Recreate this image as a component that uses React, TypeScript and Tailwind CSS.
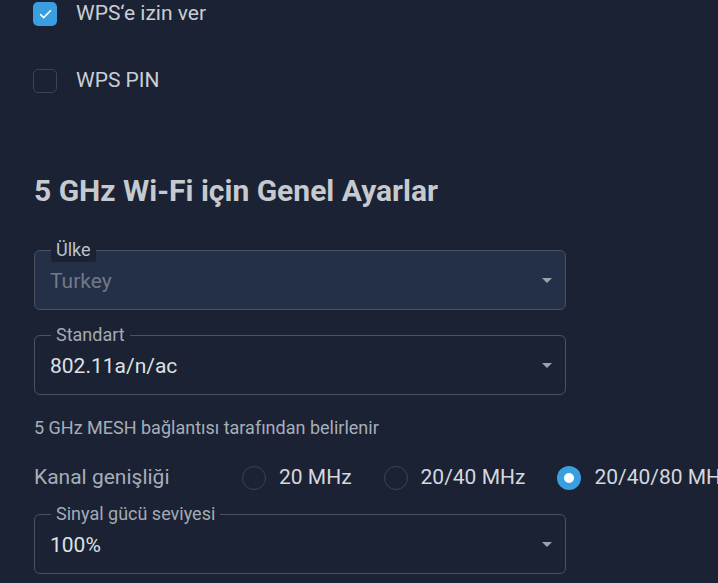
import { Check } from "lucide-react";

const WIDTHS = [
  { label: "20 MHz", checked: false },
  { label: "20/40 MHz", checked: false },
  { label: "20/40/80 MHz", checked: true },
];

function Caret() {
  return (
    <svg width="10" height="5" viewBox="0 0 10 5" className="shrink-0">
      <path d="M0 0h10L5 5z" fill="#9aa3ae" />
    </svg>
  );
}

function SelectField({ label, value, disabled }: { label: string; value: string; disabled?: boolean }) {
  return (
    <div
      className={
        "relative w-[532px] h-[60px] rounded-[6px] border border-[#4a5363] pl-[15px] pr-[13px] flex items-center justify-between " +
        (disabled ? "bg-[#243047]" : "")
      }
    >
      <span
        className={
          "absolute left-[16px] -top-[13px] h-[24px] px-[5px] rounded-[3px] bg-[#1b2233] text-[18px] leading-[24px] " +
          (disabled ? "text-[#bcc2ca]" : "text-[#a3abb5]")
        }
      >
        {label}
      </span>
      <span className={"mt-[3px] text-[21px] " + (disabled ? "text-[#707987]" : "text-[#dde1e6]")}>{value}</span>
      <Caret />
    </div>
  );
}

export default function App() {
  return (
    <div className="w-[718px] h-[583px] overflow-hidden bg-[#1b2233] font-['Roboto',sans-serif] text-[#c9ced5]">
      <div className="pl-[34px] pt-[2px]">
        <label className="flex items-center gap-[19px] h-[24px] -ml-px">
          <span className="w-[24px] h-[24px] rounded-[5px] bg-[#3b9ee0] flex items-center justify-center">
            <Check className="w-[15px] h-[15px] text-white" strokeWidth={2.5} />
          </span>
          <span className="text-[21px]">WPS‘e izin ver</span>
        </label>
        <label className="flex items-center gap-[19px] h-[24px] mt-[43px] -ml-px">
          <span className="w-[24px] h-[24px] rounded-[5px] border border-[#3a4357]" />
          <span className="text-[21px]">WPS PIN</span>
        </label>

        <h2 className="mt-[80px] text-[30px] leading-[36px] font-bold text-[#c6c9ce]">
          5 GHz Wi-Fi için Genel Ayarlar
        </h2>

        <div className="mt-[41px]">
          <SelectField label="Ülke" value="Turkey" disabled />
        </div>
        <div className="mt-[25px]">
          <SelectField label="Standart" value="802.11a/n/ac" />
        </div>

        <p className="mt-[22px] text-[18px] leading-[22px] text-[#a7aeb8]">5 GHz MESH bağlantısı tarafından belirlenir</p>

        <div className="mt-[26px] flex items-center h-[26px] whitespace-nowrap">
          <span className="w-[208px] shrink-0 text-[21px] text-[#a7aeb8]">Kanal genişliği</span>
          {WIDTHS.map((w) => (
            <label key={w.label} className="flex shrink-0 items-center gap-[13px] mr-[32px]">
              {w.checked ? (
                <span className="w-[24px] h-[24px] rounded-full bg-[#3b9ee0] flex items-center justify-center">
                  <span className="w-[10px] h-[10px] rounded-full bg-white" />
                </span>
              ) : (
                <span className="w-[24px] h-[24px] rounded-full border border-[#3a4357]" />
              )}
              <span className="text-[21px] text-[#d4d8de]">{w.label}</span>
            </label>
          ))}
        </div>

        <div className="mt-[23px]">
          <SelectField label="Sinyal gücü seviyesi" value="100%" />
        </div>
      </div>
    </div>
  );
}
